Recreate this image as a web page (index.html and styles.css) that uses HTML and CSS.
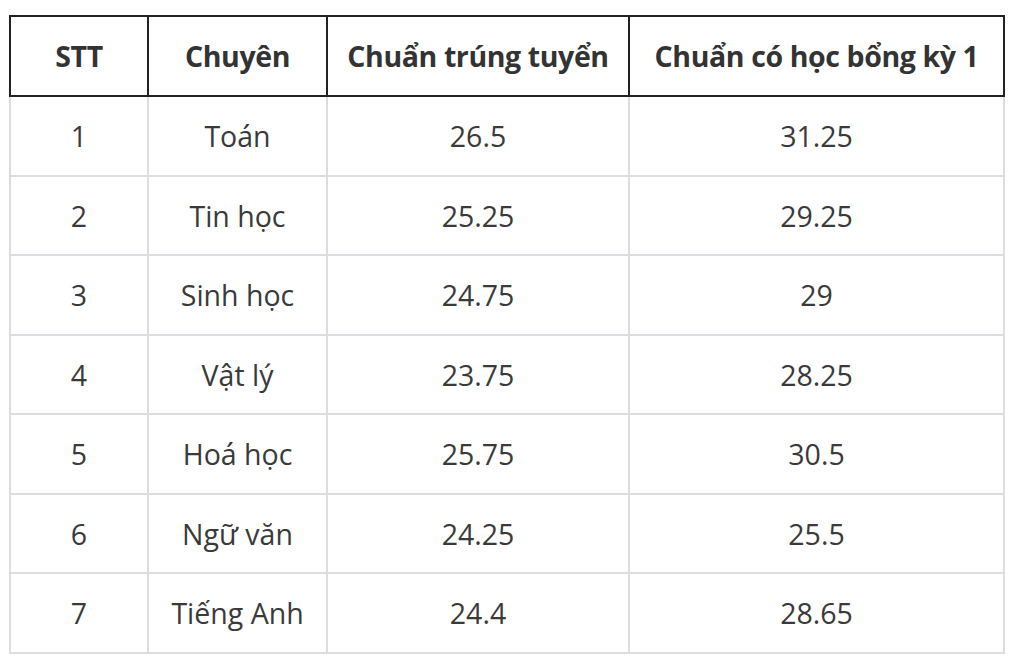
FILE: index.html
```html
<!DOCTYPE html>
<html lang="vi">
<head>
<meta charset="utf-8">
<link rel="stylesheet" href="styles.css">
</head>
<body>
<table class="score-table">
  <colgroup>
    <col class="c1"><col class="c2"><col class="c3"><col class="c4">
  </colgroup>
  <thead>
    <tr><th>STT</th><th>Chuyên</th><th>Chuẩn trúng tuyển</th><th>Chuẩn có học bổng kỳ 1</th></tr>
  </thead>
  <tbody>
    <tr><td>1</td><td>Toán</td><td>26.5</td><td>31.25</td></tr>
    <tr><td>2</td><td>Tin học</td><td>25.25</td><td>29.25</td></tr>
    <tr><td>3</td><td>Sinh học</td><td>24.75</td><td>29</td></tr>
    <tr><td>4</td><td>Vật lý</td><td>23.75</td><td>28.25</td></tr>
    <tr><td>5</td><td>Hoá học</td><td>25.75</td><td>30.5</td></tr>
    <tr><td>6</td><td>Ngữ văn</td><td>24.25</td><td>25.5</td></tr>
    <tr><td>7</td><td>Tiếng Anh</td><td>24.4</td><td>28.65</td></tr>
  </tbody>
</table>
</body>
</html>
```

FILE: styles.css
```css
html, body {
  margin: 0;
  background: #ffffff;
}
body {
  padding: 15px 0 0 9px;
  font-family: "Open Sans", "Noto Sans", sans-serif;
}
.score-table {
  border-collapse: collapse;
  table-layout: fixed;
  width: 994px;
}
.c1 { width: 138px; }
.c2 { width: 179px; }
.c3 { width: 302px; }
.c4 { width: 375px; }
.score-table th,
.score-table td {
  text-align: center;
  vertical-align: middle;
  padding: 0;
  white-space: nowrap;
}
.score-table th {
  height: 78px;
  border: 2px solid #222222;
  font-weight: 700;
  font-size: 28.5px;
  color: #333333;
  letter-spacing: -0.4px;
}
.score-table td {
  height: 78px;
  border: 2px solid #dcdde0;
  font-size: 28.5px;
  color: #3a3a3a;
}
.score-table tbody tr:nth-child(even) td {
  height: 77px;
}
```
